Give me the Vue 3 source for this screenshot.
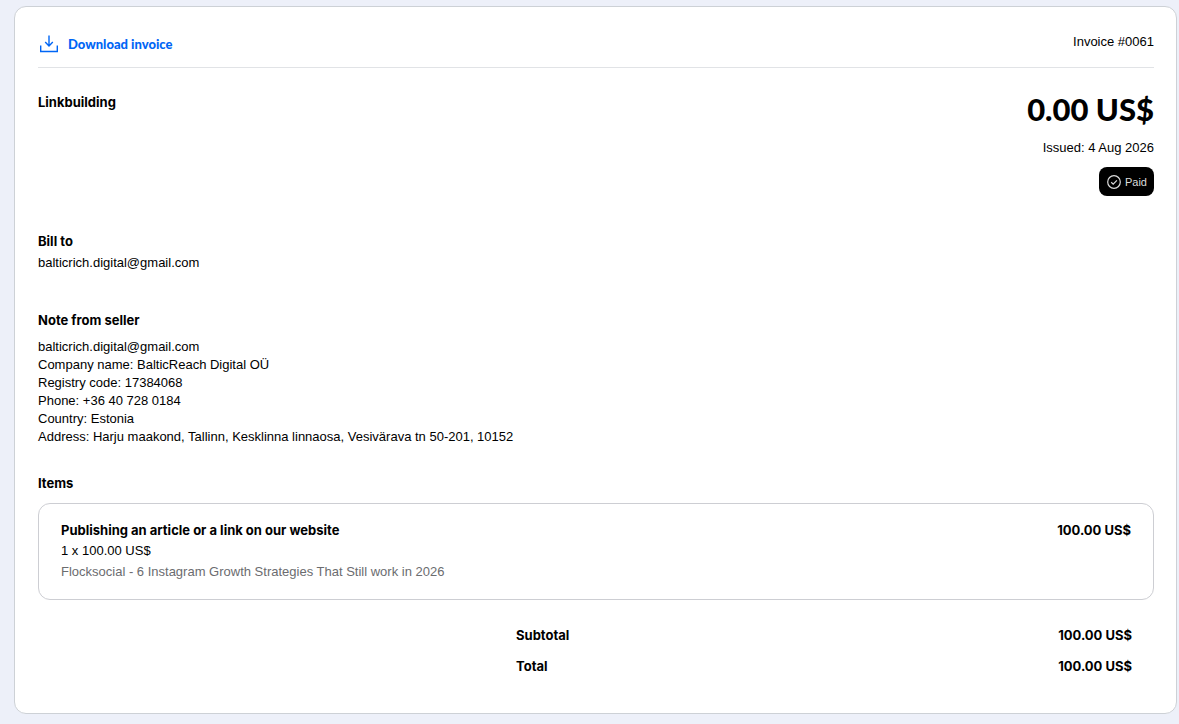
<script setup>
const sellerNote = [
  'balticrich.digital@gmail.com',
  'Company name: BalticReach Digital OÜ',
  'Registry code: 17384068',
  'Phone: +36 40 728 0184',
  'Country: Estonia',
  'Address: Harju maakond, Tallinn, Kesklinna linnaosa, Vesivärava tn 50-201, 10152',
]

const items = [
  {
    name: 'Publishing an article or a link on our website',
    quantity: '1 x 100.00 US$',
    description: 'Flocksocial - 6 Instagram Growth Strategies That Still work in 2026',
    amount: '100.00 US$',
  },
]

const totals = [
  { label: 'Subtotal', amount: '100.00 US$' },
  { label: 'Total', amount: '100.00 US$' },
]
</script>

<template>
  <main class="page">
    <article class="invoice">
      <header class="toolbar">
        <a class="download" href="#download">
          <svg class="download-icon" viewBox="0 0 20 20" aria-hidden="true">
            <path d="M10 1.5v10.2M6.2 8.1l3.8 3.8 3.8-3.8M1.7 11.5v6h16.6v-6" />
          </svg>
          <span>Download invoice</span>
        </a>
        <span class="number">Invoice #0061</span>
      </header>

      <section class="summary">
        <h2>Linkbuilding</h2>
        <div class="status">
          <p class="due">0.00 US$</p>
          <p class="issued">Issued: 4 Aug 2026</p>
          <span class="badge">
            <svg class="badge-icon" viewBox="0 0 14 14" aria-hidden="true">
              <circle cx="7" cy="7" r="6.3" />
              <path d="M4.2 7.2l2 1.9 3.7-3.8" />
            </svg>
            Paid
          </span>
        </div>
      </section>

      <section class="bill-to">
        <h2>Bill to</h2>
        <p>balticrich.digital@gmail.com</p>
      </section>

      <section class="note">
        <h2>Note from seller</h2>
        <p v-for="line in sellerNote" :key="line">{{ line }}</p>
      </section>

      <section class="items">
        <h2>Items</h2>
        <ul class="item-list">
          <li v-for="item in items" :key="item.name" class="item">
            <div>
              <h3>{{ item.name }}</h3>
              <p>{{ item.quantity }}</p>
              <p class="muted">{{ item.description }}</p>
            </div>
            <strong>{{ item.amount }}</strong>
          </li>
        </ul>
      </section>

      <dl class="totals">
        <div v-for="row in totals" :key="row.label" class="total-row">
          <dt>{{ row.label }}</dt>
          <dd>{{ row.amount }}</dd>
        </div>
      </dl>
    </article>
  </main>
</template>

<style>
body {
  background: #edf0f9;
}
</style>

<style scoped>
.page {
  padding: 6px 2px 10px 14px;
  color: #000;
  font-family: "Liberation Sans", Arial, sans-serif;
  font-size: 13px;
  line-height: 18px;
}

h2,
h3,
p,
ul,
dl,
dd {
  margin: 0;
  padding: 0;
}

h2,
h3,
strong,
.totals {
  font-family: Inter, sans-serif;
  font-size: 13px;
  font-weight: 700;
  line-height: 18px;
}

.invoice {
  padding: 22px 22px 38px 23px;
  background: #fff;
  border: 1px solid #cdd1d6;
  border-radius: 12px;
}

.toolbar {
  display: flex;
  justify-content: space-between;
  align-items: flex-start;
  padding: 4px 0 12px;
  border-bottom: 1px solid #e1e3e6;
}

.download {
  display: flex;
  align-items: center;
  gap: 9px;
  padding: 0 1px;
  color: #0066f5;
  font-family: Lato, sans-serif;
  font-size: 13px;
  font-weight: 900;
  line-height: 22px;
  text-decoration: none;
}

.download-icon {
  width: 20px;
  height: 20px;
  fill: none;
  stroke: currentColor;
  stroke-width: 1.4;
}

.summary {
  display: flex;
  justify-content: space-between;
  padding-top: 25px;
}

.status {
  display: flex;
  flex-direction: column;
  align-items: flex-end;
}

.due {
  font-family: Lato, sans-serif;
  font-size: 31px;
  font-weight: 900;
  line-height: 32px;
}

.issued {
  margin: 14px 0 10px;
}

.badge {
  display: flex;
  align-items: center;
  gap: 4px;
  height: 29px;
  padding: 0 7px 0 8px;
  background: #000;
  border-radius: 8px;
  color: #dcdcdc;
  font-size: 11px;
}

.badge-icon {
  width: 14px;
  height: 14px;
  fill: none;
  stroke: currentColor;
  stroke-width: 1.2;
}

.bill-to {
  display: grid;
  gap: 4px;
  margin-top: 36px;
}

.note {
  margin-top: 39px;
}

.note h2 {
  margin-bottom: 9px;
}

.items {
  margin-top: 28px;
}

.item-list {
  margin-top: 11px;
  list-style: none;
}

.item {
  display: flex;
  justify-content: space-between;
  gap: 24px;
  padding: 17px 22px 18px;
  border: 1px solid #cdced3;
  border-radius: 12px;
}

.item > div {
  display: grid;
  gap: 3px;
}

.muted {
  color: #6b6c6f;
}

.totals {
  display: grid;
  gap: 13px;
  margin-top: 26px;
  padding-right: 22px;
}

.total-row {
  display: flex;
  justify-content: space-between;
  margin-left: 43.7%;
}
</style>
